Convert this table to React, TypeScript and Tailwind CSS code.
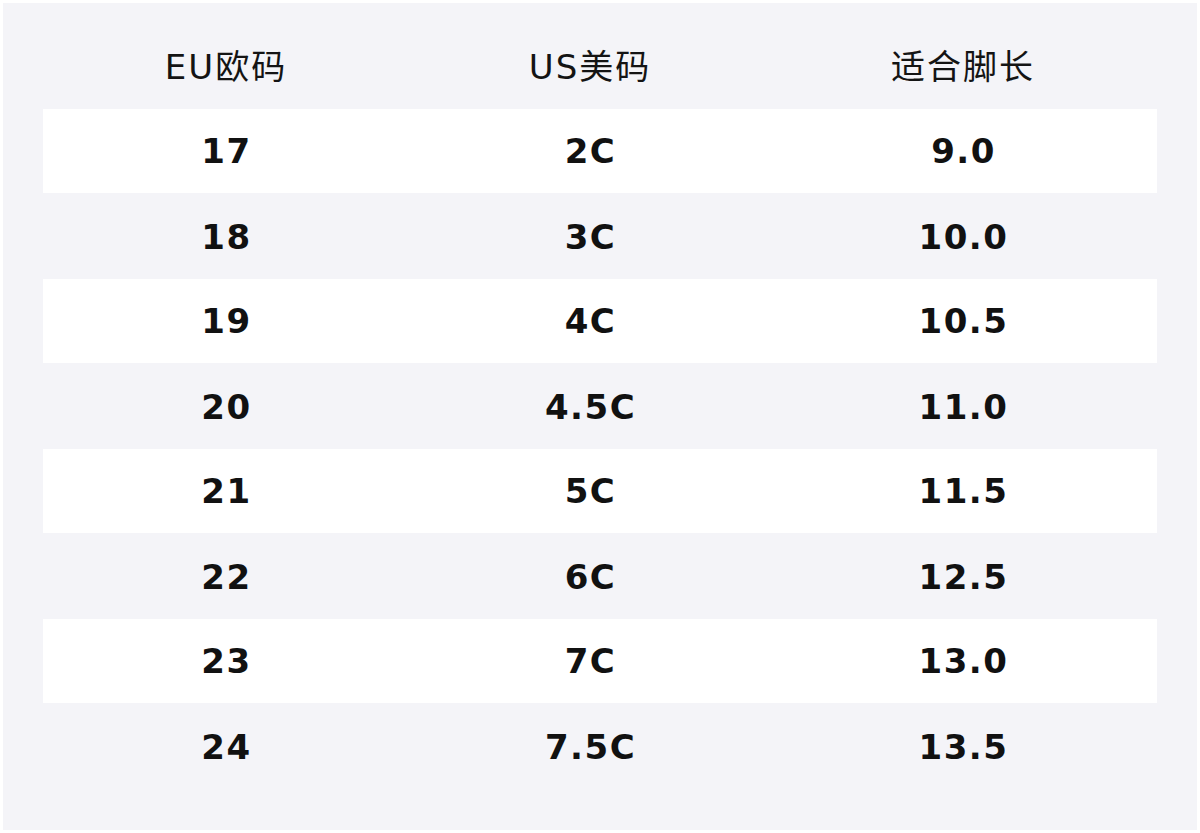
const rows = [
  ['17', '2C', '9.0'],
  ['18', '3C', '10.0'],
  ['19', '4C', '10.5'],
  ['20', '4.5C', '11.0'],
  ['21', '5C', '11.5'],
  ['22', '6C', '12.5'],
  ['23', '7C', '13.0'],
  ['24', '7.5C', '13.5'],
]

const font = { fontFamily: '"DejaVu Sans", "Noto Sans CJK SC", sans-serif' }

export default function App() {
  return (
    <div className="w-[1200px] h-[833px] bg-white p-[3px]" style={font}>
      <div className="h-[827px] bg-[#f4f4f8] px-[40px] pt-[22px]">
        <div className="grid grid-cols-[364px_364px_382px] h-[84px] items-center text-[34px] tracking-[2px] text-[#141414]">
          <div className="text-center pl-[2px]">EU欧码</div>
          <div className="text-center pl-[2px]">US美码</div>
          <div className="text-center pl-[2px]">适合脚长</div>
        </div>
        {rows.map((r, i) => (
          <div
            key={r[0]}
            className={
              i % 2 === 0
                ? 'grid grid-cols-[364px_364px_382px] h-[85px] pt-[1px] items-center bg-white border-b border-[#f4f4f8] text-[34px] tracking-[1.5px] font-bold text-[#111]'
                : 'grid grid-cols-[364px_364px_382px] h-[85px] pt-[1px] items-center text-[34px] tracking-[1.5px] font-bold text-[#111]'
            }
          >
            <div className="text-center pl-[3px]">{r[0]}</div>
            <div className="text-center pl-[3px]">{r[1]}</div>
            <div className="text-center pl-[3px]">{r[2]}</div>
          </div>
        ))}
      </div>
    </div>
  )
}
